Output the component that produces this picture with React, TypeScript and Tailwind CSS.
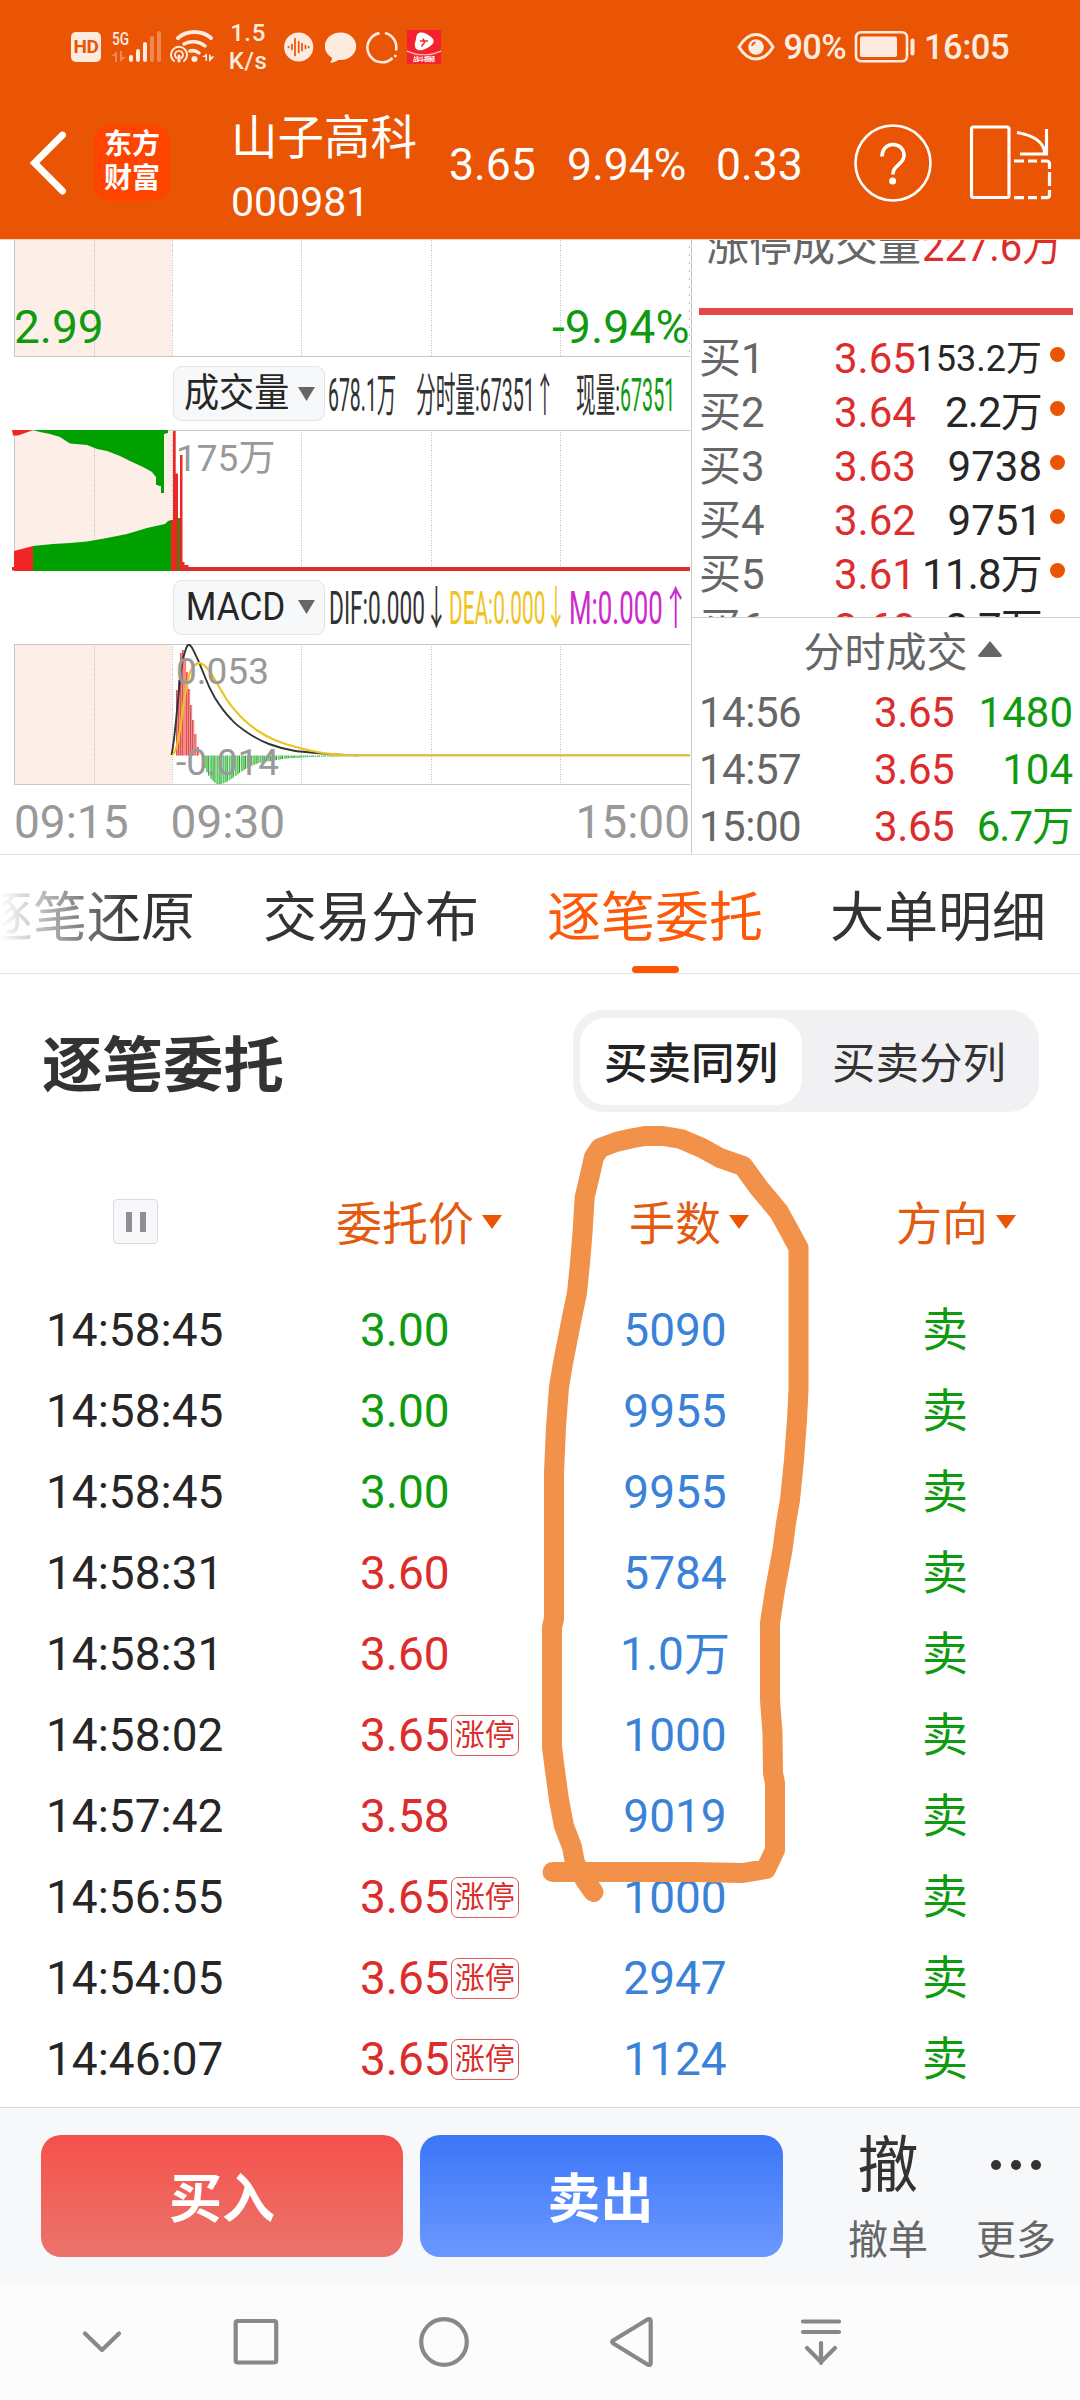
import React from 'react';

const GREEN = '#00a000';

interface Order {
  time: string;
  price: string;
  tone: string;
  limit?: boolean;
  lots: string;
}

const DOWN_TEXT = 'text-[#0f9b0f]';
const UP_TEXT = 'text-[#dc2d2d]';

const ORDERS: Order[] = [
  { time: '14:58:45', price: '3.00', tone: DOWN_TEXT, lots: '5090' },
  { time: '14:58:45', price: '3.00', tone: DOWN_TEXT, lots: '9955' },
  { time: '14:58:45', price: '3.00', tone: DOWN_TEXT, lots: '9955' },
  { time: '14:58:31', price: '3.60', tone: UP_TEXT, lots: '5784' },
  { time: '14:58:31', price: '3.60', tone: UP_TEXT, lots: '1.0万' },
  { time: '14:58:02', price: '3.65', tone: UP_TEXT, limit: true, lots: '1000' },
  { time: '14:57:42', price: '3.58', tone: UP_TEXT, lots: '9019' },
  { time: '14:56:55', price: '3.65', tone: UP_TEXT, limit: true, lots: '1000' },
  { time: '14:54:05', price: '3.65', tone: UP_TEXT, limit: true, lots: '2947' },
  { time: '14:46:07', price: '3.65', tone: UP_TEXT, limit: true, lots: '1124' },
];

const BIDS = [
  { label: '买1', price: '3.65', amount: '153.2万', size: 'text-[36px]' },
  { label: '买2', price: '3.64', amount: '2.2万', size: 'text-[42px] tracking-[-0.8px]' },
  { label: '买3', price: '3.63', amount: '9738', size: 'text-[42px]' },
  { label: '买4', price: '3.62', amount: '9751', size: 'text-[42px]' },
  { label: '买5', price: '3.61', amount: '11.8万', size: 'text-[42px] tracking-[-0.8px]' },
  { label: '买6', price: '3.60', amount: '2.7万', size: 'text-[42px] tracking-[-0.8px]' },
];

const TRADES = [
  { time: '14:56', amount: '1480', spacing: '' },
  { time: '14:57', amount: '104', spacing: '' },
  { time: '15:00', amount: '6.7万', spacing: 'tracking-[-1px]' },
];

// MACD histogram outlines, as [x, y] on the chart's own coordinates
const MACD_POS = [
  [177, 690], [179, 680], [181, 653], [183, 650], [185, 660], [187, 672],
  [189, 689], [191, 705], [193, 720], [195.5, 734], [198, 747],
];
const MACD_NEG = [
  [201, 759], [204, 768], [207, 774], [211, 780], [216, 784], [221, 784], [226, 782],
  [232, 778], [240, 772], [248, 767], [258, 763], [270, 761], [285, 758.5], [310, 757], [350, 756],
];

function negAt(x: number) {
  const i = MACD_NEG.findIndex((p) => p[0] > x);
  if (i <= 0) return 756;
  const [x0, y0] = MACD_NEG[i - 1];
  const [x1, y1] = MACD_NEG[i];
  return y0 + ((y1 - y0) * (x - x0)) / (x1 - x0);
}

function StatusBar() {
  return (
    <div className="flex h-[94px] items-center pl-[71px] pr-[71px] text-[#fdebe0]">
      <div className="flex h-[30px] w-[30px] items-center justify-center rounded-[5px] bg-[#fdebe0] text-[19px] font-bold tracking-tight text-[#e95504]">HD</div>
      <svg width="51" height="34" viewBox="111 29 51 34" className="ml-[10px]">
        <text x="112" y="43.500" fontSize="19" fontWeight="500" textLength="17" lengthAdjust="spacingAndGlyphs" fill="#fdebe0">5G</text>
        <g fill="#fdebe0">
          <rect x="129" y="54" width="4" height="7" rx="2" />
          <rect x="136" y="48" width="4" height="13" rx="2" />
          <rect x="143" y="41" width="4" height="20" rx="2" />
          <g opacity=".35">
            <rect x="150" y="35" width="4" height="26" rx="2" />
            <rect x="157" y="30" width="4" height="31" rx="2" />
            <path d="M117 50v11h-2v-6h-3.500zM120 61V50h2v6h4z" />
          </g>
        </g>
      </svg>
      <svg width="46" height="34" viewBox="170 29 46 34" className="ml-2" fill="none" stroke="#fdebe0" strokeLinecap="round">
        <path d="M178 37a26 26 0 0 1 33 0" strokeWidth="4" />
        <path d="M184 43a19 19 0 0 1 21 2" strokeWidth="3.500" />
        <path d="M190 50a10 10 0 0 1 9 2" strokeWidth="3.500" />
        <path d="M174 60a8 8 0 1 1 10 0" strokeWidth="2" />
        <path d="M176.500 57a4 4 0 1 1 5 0" strokeWidth="1.800" />
        <path d="M179 55v5" strokeWidth="3" />
        <circle cx="194.500" cy="58" r="3" fill="#fdebe0" stroke="none" />
        <path d="M207 52.500V60h-1.500v-4H202zM209 61v-7.500h1.500v2h4z" fill="#fdebe0" stroke="none" />
      </svg>
      <div className="ml-[11px] w-[42px] text-center text-[24px] leading-[28px] font-medium tracking-wide">
        1.5
        <br />
        K/s
      </div>
      <svg width="30" height="34" viewBox="284 29.500 30 34" className="ml-[15px]">
        <circle cx="298.700" cy="46.500" r="14.600" fill="#fdebe0" />
        <path d="M288.500 46v1M292 44v5M295 38v17M298.700 41v11M302 43v7M305.500 45v3M308.700 46v1" stroke="#e95504" strokeWidth="1.700" strokeLinecap="round" />
      </svg>
      <svg width="32" height="34" viewBox="325 29.500 32 34" className="ml-[11px]">
        <path d="M340.500 32c8.700 0 15.700 6 15.700 13.800 0 8-7 13.700-15.700 13.700h-2.500c-2 1.800-5 2.600-8 2.700 1.300-1.500 2-3.200 2-5-4.300-2.500-7.200-6.400-7.200-11.400C324.800 38 331.800 32 340.500 32z" fill="#fdebe0" />
      </svg>
      <svg width="34" height="34" viewBox="365 29.500 34 34" className="ml-2" fill="none" stroke="#fdebe0" strokeWidth="2.600">
        <path d="M385 32.600A14.700 14.700 0 0 1 396 50" />
        <path d="M396 54.500a14.700 14.700 0 0 1-1.500 2" />
        <path d="M392.500 57.500A14.700 14.700 0 1 1 379.500 32.600" />
      </svg>
      <svg width="34" height="34" viewBox="0 0 34 34" className="ml-2">
        <rect width="34" height="34" fill="#f5222d" />
        <path d="M12 3c4-1.500 8 1 11.500 3.500S28 12 24.500 15s-9.500 6.500-13.500 5-3.500-6-2.500-9 .5-7 3.500-8z" fill="#fff" />
        <path d="M13 11h8M16 8.500l1.500 4-3 4" stroke="#f5222d" strokeWidth="1.500" fill="none" />
        <path d="M0 21c10 5 24 5 34 0" stroke="#ffc9c9" strokeWidth="1.200" fill="none" />
        <text x="6" y="31" fontSize="6" fontWeight="700" textLength="22" fill="#fff">战斗视频</text>
      </svg>
      <div className="ml-auto flex items-center">
        <svg width="38" height="30" viewBox="0 0 38 30" fill="none">
          <path d="M2 15C7 6.500 12.500 2.500 19 2.500S31 6.500 36 15c-5 8.500-10.500 12-17 12S7 23.500 2 15z" stroke="#fdebe0" strokeWidth="3" />
          <circle cx="19" cy="15" r="7.800" fill="#fdebe0" />
          <path d="M15 14c.3-2 1.600-3.300 3.500-3.600" stroke="#e95504" strokeWidth="1.600" />
        </svg>
        <span className="ml-2 text-[34.5px] leading-none font-medium tracking-[-0.7px]">90%</span>
        <svg width="62" height="34" viewBox="0 0 62 34" className="ml-[8px]">
          <rect x="2" y="2.200" width="51" height="29" rx="5" fill="none" stroke="#fdebe0" strokeWidth="2.600" />
          <rect x="6" y="6.500" width="37" height="20.500" rx="2" fill="#fdebe0" />
          <rect x="56.500" y="8.500" width="4" height="17" rx="2" fill="#fdebe0" />
        </svg>
        <span className="ml-[8px] text-[34.5px] leading-none font-medium tracking-[-0.5px]">16:05</span>
      </div>
    </div>
  );
}

function StockHeader() {
  return (
    <div className="flex h-[145px] items-center pl-[29px] text-white">
      <svg width="38" height="64" viewBox="0 0 38 64" className="mb-[7px] shrink-0">
        <path d="M33.500 4L5.500 32l28 28" fill="none" stroke="#fff" strokeWidth="6.800" strokeLinecap="round" />
      </svg>
      <div className="mb-[7px] ml-[27px] h-[76px] w-[76px] shrink-0 rounded-[16px] bg-[#ff4400] pt-[3px] text-center text-[28px] leading-[34px] font-bold">
        东方
        <br />
        财富
      </div>
      <div className="mt-[6px] ml-[61px] w-[190px] shrink-0">
        <div className="text-[46.5px] leading-[66px]">山子高科</div>
        <div className="text-[41px] leading-[63px]">000981</div>
      </div>
      <div className="mb-[2px] ml-[28px] flex shrink-0 text-[44.5px]">
        <span className="w-[118px]">3.65</span>
        <span className="w-[149px]">9.94%</span>
        <span className="w-[137px]">0.33</span>
      </div>
      <svg width="80" height="80" viewBox="0 0 80 80" className="mb-[7px] shrink-0" fill="none" stroke="#fff">
        <circle cx="40" cy="40" r="37.500" strokeWidth="2.600" />
        <path d="M29 33.500c0-7 4.500-12 11-12s11 4.500 11 11c0 9-11 9.500-11 18v1" strokeWidth="3.600" />
        <circle cx="39.600" cy="58" r="3.500" fill="#fff" stroke="none" />
      </svg>
      <svg width="84" height="80" viewBox="969 123 84 80" className="mb-[7px] ml-[36px] shrink-0" fill="none" stroke="#fff" strokeWidth="3.200">
        <rect x="971.500" y="127" width="37.500" height="70.500" rx="2" />
        <path d="M1017 132.500c17 3 27 9 28 21.500M1046.500 129v25H1020" />
        <path d="M1014 161h10M1028 161h9M1041 161h5.500q3 0 3 3v5M1049.500 172v14M1049.500 190v5q0 2.700-3 2.700h-5.500M1037 197.700h-9M1024 197.700h-10" />
      </svg>
    </div>
  );
}

function Grid({ top, bottom }: { top: number; bottom: number }) {
  return (
    <>
      <rect x="14" y={top} width="158" height={bottom - top} fill="#fdeee7" />
      <path
        d={`M94.500 ${top}V${bottom}M172.500 ${top}V${bottom}M301.500 ${top}V${bottom}M431.500 ${top}V${bottom}M560.500 ${top}V${bottom}`}
        stroke="#b8b8b8"
        strokeWidth="1"
        strokeDasharray="1 1.500"
      />
      <path d={`M14.500 ${top}V${bottom}M14 ${bottom - 0.5}H690`} stroke="#c8c8c8" fill="none" />
    </>
  );
}

function IndicatorPicker({ children }: { children: React.ReactNode }) {
  return (
    <div className="flex h-[55px] w-[152px] shrink-0 items-center rounded-[9px] border border-[#e1e4e8] bg-[#f6f8fa] pl-[10px] text-[39px] text-[#262626]">
      <div className="w-[114px] shrink-0">
        <div className="origin-left scale-x-[.9] whitespace-nowrap">{children}</div>
      </div>
      <svg width="17" height="14" viewBox="0 0 17 14">
        <path d="M0 0h17L8.500 14z" fill="#666" />
      </svg>
    </div>
  );
}

function ChartColumn() {
  const negBars: number[] = [];
  for (let x = 202; x < 345; x += 2.05) negBars.push(x);

  return (
    <div className="flex w-[691px] shrink-0 flex-col">
      <svg width="691" height="117" viewBox="0 240 691 117" className="block shrink-0">
        <Grid top={240} bottom={357} />
        <path d="M689.500 246v110" stroke="#e9a9a9" strokeDasharray="2 6" />
        <text x="14" y="343" fontSize="46" fill="#0f9b0f">2.99</text>
        <text x="689.500" y="343" fontSize="46.500" fill="#0f9b0f" textAnchor="end">-9.94%</text>
      </svg>

      <div className="flex h-[73px] items-center pl-[173px] text-[46px] text-[#333]">
        <IndicatorPicker>成交量</IndicatorPicker>
        <div className="mt-[4px] ml-[3px] w-[88px] shrink-0">
          <div className="w-max origin-left scale-x-[.423] whitespace-nowrap">678.1万</div>
        </div>
        <div className="mt-[4px] w-[160px] shrink-0">
          <div className="w-max origin-left scale-x-[.427] whitespace-nowrap">分时量:67351↑</div>
        </div>
        <div className="mt-[4px] w-[100px] shrink-0">
          <div className="w-max origin-left scale-x-[.427] whitespace-nowrap">
            现量:<span className="text-[#0f9b0f]">67351</span>
          </div>
        </div>
      </div>

      <svg width="691" height="142" viewBox="0 430 691 142" className="block shrink-0">
        <Grid top={430} bottom={571} />
        <path d="M14 430.500H690" stroke="#c8c8c8" />
        <text x="176" y="470.500" fontSize="37" fill="#999">175万</text>
        <path
          d="M33 430L40 432 50 434 60 437 66 441 70 443.500 87 445 97 449 107 451 120 456 130 461 143 467 152 472 156 477V485H158.500V486H161V493H164V434L168 433V430z"
          fill={GREEN}
        />
        <path d="M12 430H33L28 432 22 434 18 435.500H13z" fill="#f02626" />
        <path d="M14 551L33 546V571H14z" fill="#f02626" />
        <path d="M33 546L53 544 70 543 87 541.500 107 538 127 534 147 528 165 524 168 521 171 520V571H33z" fill={GREEN} />
        <path d="M171 520H173V431H175.700V473.500H178V518H180V455H182.500V562H184.500V565H188.500V567H690V571H171z" fill="#ee2626" />
        <rect x="177" y="518" width="3.200" height="53" fill="#64700c" />
        <path d="M12 568.700H14M184 568.700H690" stroke="#d63030" strokeWidth="3.400" />
      </svg>

      <div className="flex h-[72px] items-center pl-[173px] text-[46px]">
        <div className="mb-[2px]">
          <IndicatorPicker>
            <span className="ml-[2px]">MACD</span>
          </IndicatorPicker>
        </div>
        <div className="ml-[4px] w-[120px] shrink-0 text-[#333]">
          <div className="w-max origin-left scale-x-[.493] whitespace-nowrap">DIF:0.000↓</div>
        </div>
        <div className="w-[120px] shrink-0 text-[#efc31c]">
          <div className="w-max origin-left scale-x-[.453] whitespace-nowrap">DEA:0.000↓</div>
        </div>
        <div className="w-[118px] shrink-0 text-[#cc28cc]">
          <div className="w-max origin-left scale-x-[.562] whitespace-nowrap">M:0.000↑</div>
        </div>
      </div>

      <svg width="691" height="141" viewBox="0 644 691 141" className="block shrink-0">
        <Grid top={644} bottom={785} />
        <path d="M14 644.500H690" stroke="#c8c8c8" />
        {MACD_POS.map(([x, y], i) => (
          <g key={x}>
            <rect x={x - 1} y={y} width="2.200" height={755.5 - y} fill="#ff8585" />
            {i !== 4 && <rect x={x - 1} y={y} width="0.700" height={755.5 - y} fill="#b04848" />}
          </g>
        ))}
        {negBars.map((x, i) => (
          <rect key={x} x={x} y="755.500" width={i % 3 === 0 ? 1.2 : 1.8} height={negAt(x) - 755.5} fill={i % 3 === 0 ? '#2f9a35' : '#5ccb60'} />
        ))}
        <path
          d="M171.500 755C174 744 176 722 178 700S182 655 187.700 645C191 643 194 652 198 660L205 677C208 685 211 691 215 698C220 706 225 713 231 719C236 725 242 729 248 733C254 737 261 741 269 744C277 747 285 749 293 750.500S335 755 358 755.300"
          fill="none"
          stroke="#333"
          strokeWidth="1.900"
        />
        <path
          d="M172.500 755C176 752 179 738 181 723C183 707 185 692 188 680C190 670 194 664 199 663.200C204 663 210 671 215 680L227 700C231 706 236 712 241 717C246 722 252 727 258 731C264 735 270 738 276 740.500C282 743 289 745.500 296 747C304 749.500 312 751 320 752.500S345 755 358 755.300"
          fill="none"
          stroke="#ecc421"
          strokeWidth="2.200"
        />
        <path d="M330 755.300H690" stroke="#dcc04a" strokeWidth="2.400" />
        <text x="176" y="684" fontSize="37" fill="#999">0.053</text>
        <text x="176" y="774.500" fontSize="37" fill="#999">-0.014</text>
      </svg>

      <div className="flex h-[69px] items-center pt-[4px] pr-px pl-[14px] text-[46px] leading-none text-[#999]">
        <span>09:15</span>
        <span className="ml-[42px]">09:30</span>
        <span className="ml-auto">15:00</span>
      </div>
    </div>
  );
}

function QuoteColumn() {
  return (
    <div className="flex flex-1 flex-col border-l border-[#c8c8c8] text-[42px] text-[#666]">
      <div className="flex h-[379px] flex-col overflow-hidden">
        <div className="-mt-[21px] flex h-[54px] shrink-0 items-center pl-[14px] text-[43px]">
          <span className="w-[216px] shrink-0">涨停成交量</span>
          <span className="origin-left scale-x-[.95] text-[42px] whitespace-nowrap text-[#dc2d2d]">227.6万</span>
        </div>
        <div className="mt-[35px] mr-[7px] ml-[7px] h-[7px] shrink-0 bg-[#e64747]" />
        <div className="mt-[15px] flex flex-col">
          {BIDS.map((b) => (
            <div key={b.label} className="flex h-[54px] shrink-0 items-center pl-[7px] leading-[54px]">
              <span className="w-[135px] pt-[4px]">{b.label}</span>
              <span className="w-[82px] pt-[4px] text-[#dc2d2d]">{b.price}</span>
              <span className={`flex w-[126px] justify-end pt-[3px] text-right whitespace-nowrap text-[#262626] ${b.size}`}>{b.amount}</span>
              <span className="mb-[6px] ml-[8px] h-[15px] w-[15px] rounded-full bg-[#e95504]" />
            </div>
          ))}
        </div>
      </div>
      <div className="flex h-[66px] shrink-0 items-center justify-center border-t border-[#d0d0d0] pt-[6px] pl-[33px] text-[41px]">
        <span>分时成交</span>
        <svg width="24" height="16" viewBox="0 0 24 16" className="mb-[9px] ml-[10px]">
          <path d="M12 0l12 14.500q-.5 1.500-2 1.500H2q-1.500 0-2-1.500z" fill="#666" />
        </svg>
      </div>
      <div className="flex flex-col">
        {TRADES.map((t) => (
          <div key={t.time} className="flex h-[57px] items-center pr-[7px] pl-[7px] leading-[57px]">
            <span className="w-[175px] pt-[2px] tracking-[-0.5px]">{t.time}</span>
            <span className="pt-[2px] tracking-[-0.4px] text-[#dc2d2d]">3.65</span>
            <span className={`ml-auto pt-[2px] text-[#0f9b0f] ${t.spacing}`}>{t.amount}</span>
          </div>
        ))}
      </div>
    </div>
  );
}

function SortHead({ label }: { label: string }) {
  return (
    <div className="flex items-center text-[46px] text-[#e45a10]">
      <span>{label}</span>
      <svg width="20" height="14" viewBox="0 0 20 14" className="mb-[6px] ml-[8px]">
        <path d="M0 0h20L10 14z" fill="#ea5504" />
      </svg>
    </div>
  );
}

function OrderTable() {
  return (
    <div className="flex h-[947px] shrink-0 flex-col">
      <div className="flex h-[129px] shrink-0 items-center">
        <div className="mb-[6px] ml-[113px] flex h-[45px] w-[45px] items-center justify-center gap-[8px] rounded-[4px] border border-[#d8dbe0] bg-[#f6f8fa]">
          <span className="h-[20px] w-[6px] bg-[#8e8e93]" />
          <span className="h-[20px] w-[6px] bg-[#8e8e93]" />
        </div>
        <div className="ml-[178px] w-[293px]">
          <SortHead label="委托价" />
        </div>
        <div className="w-[267px]">
          <SortHead label="手数" />
        </div>
        <SortHead label="方向" />
      </div>
      {ORDERS.map((o, i) => (
        <div key={i} className="flex h-[81px] shrink-0 items-center pt-[1px] text-[46px]">
          <span className="w-[360px] shrink-0 pl-[46px] text-[#262626]">{o.time}</span>
          <div className={`flex w-[225px] shrink-0 items-center ${o.tone}`}>
            <span>{o.price}</span>
            {o.limit && (
              <span className="ml-[1px] flex h-[41px] w-[68px] items-center justify-center rounded-[7px] border border-[#dd5a5a] text-[30px] leading-none">涨停</span>
            )}
          </div>
          <span className="w-[180px] shrink-0 text-center text-[#3a82d8]">{o.lots}</span>
          <span className="ml-[157px] text-[#0f9b0f]">卖</span>
        </div>
      ))}
    </div>
  );
}

// Freehand marker drawn around the lots column
function MarkerStroke() {
  return (
    <svg width="300" height="800" viewBox="530 1110 300 800" className="pointer-events-none absolute top-[1110px] left-[530px]" fill="none" stroke="#f29149" strokeWidth="20" strokeLinecap="round" strokeLinejoin="round">
      <path d="M593.500 1892L585 1880 575 1863 572 1847 564 1826 559 1800 554.500 1767 552 1747V1627L554 1619V1473L556 1427 559 1387 563 1363 567.500 1340 572 1317 577 1293 580 1263 582.500 1233 584.700 1197 589.500 1177 594 1157 600 1148 616 1142 631 1138.500 645 1136H663L681 1139 702 1148 720 1158 743 1166 759 1188 779 1212 790 1232 798.500 1248V1390L797 1420 794 1460 790 1500 786 1523 782.500 1550 775 1590 770 1623V1700L772.500 1733 773 1773 775 1783V1850L766 1869 743 1873 693 1872H552.500" />
    </svg>
  );
}

function TradeBar() {
  return (
    <div className="flex h-[177px] shrink-0 border-t border-[#d4d7db] bg-[#f6f8fa] pt-[27px] pl-[41px]">
      <button className="h-[122px] w-[362px] shrink-0 rounded-[20px] bg-linear-to-b from-[#f5504a] to-[#ea736c] pt-[10px] text-[53px] font-bold text-white">买入</button>
      <button className="ml-[17px] h-[122px] w-[363px] shrink-0 rounded-[20px] bg-linear-to-b from-[#3b76f8] to-[#6b98ff] pt-[10px] pr-[2px] text-[53px] font-bold text-white">卖出</button>
      <div className="ml-[55px] flex w-[100px] shrink-0 flex-col items-center">
        <span className="text-[61px] leading-[62px] text-[#333]">撤</span>
        <span className="mt-[19px] text-[40px] leading-[50px] text-[#666]">撤单</span>
      </div>
      <div className="ml-[28px] flex w-[100px] shrink-0 flex-col items-center">
        <div className="flex h-[60px] items-center gap-[10px]">
          <span className="h-[10px] w-[10px] rounded-full bg-[#333]" />
          <span className="h-[10px] w-[10px] rounded-full bg-[#333]" />
          <span className="h-[10px] w-[10px] rounded-full bg-[#333]" />
        </div>
        <span className="mt-[21px] text-[40px] leading-[50px] text-[#666]">更多</span>
      </div>
    </div>
  );
}

function NavBar() {
  return (
    <div className="flex h-[116px] shrink-0 items-center bg-[#fcfcfc] pl-[82px]">
      <svg width="40" height="54" viewBox="82 2315 40 54" fill="none" stroke="#888" strokeWidth="4.200" strokeLinecap="round" strokeLinejoin="round">
        <path d="M85 2333.500l17 16.500 17-16.500" />
      </svg>
      <svg width="46" height="54" viewBox="233 2315 46 54" className="ml-[111px]" fill="none" stroke="#888" strokeWidth="4.200">
        <rect x="235.700" y="2321" width="40.500" height="41.500" rx="2" />
      </svg>
      <svg width="52" height="54" viewBox="418 2315 52 54" className="ml-[139px]" fill="none" stroke="#888" strokeWidth="4.200">
        <circle cx="444" cy="2342" r="22.800" />
      </svg>
      <svg width="46" height="54" viewBox="608 2315 46 54" className="ml-[138px]" fill="none" stroke="#888" strokeWidth="4.200" strokeLinejoin="round">
        <path d="M613 2340.500q-1.700 1.300 0 2.800l34.500 21.200q3.200 1.500 3.200-1.500v-42q0-3-3.200-1.500z" />
      </svg>
      <svg width="44" height="54" viewBox="799 2315 44 54" className="ml-[145px]" fill="none" stroke="#888" strokeWidth="4.200" strokeLinecap="round" strokeLinejoin="round">
        <path d="M803 2321.500h36M803 2332h36M821 2343v20M807 2348l14 14 14-14" />
      </svg>
    </div>
  );
}

export default function App() {
  return (
    <div className="relative flex h-[2400px] w-[1080px] flex-col overflow-hidden bg-white font-[Roboto,'Noto_Sans_CJK_SC',sans-serif]">
      <header className="h-[240px] shrink-0 border-b border-[#fbd3bd] bg-[#e95504]">
        <StatusBar />
        <StockHeader />
      </header>

      <div className="flex h-[614px] shrink-0">
        <ChartColumn />
        <QuoteColumn />
      </div>

      <nav className="relative flex h-[120px] shrink-0 items-center gap-[68px] overflow-hidden border-y border-[#e2e2e2] text-[54px] text-[#333]">
        <span className="-ml-[21px] shrink-0 pt-[8px]">逐笔还原</span>
        <span className="shrink-0 pt-[8px]">交易分布</span>
        <span className="flex h-full shrink-0 flex-col items-center text-[#fc5a08]">
          <span className="flex h-[111px] items-center pt-[15px]">逐笔委托</span>
          <span className="h-[7px] w-[47px] rounded-full bg-[#ff5500]" />
        </span>
        <span className="-ml-[1px] shrink-0 pt-[8px]">大单明细</span>
        <div className="absolute top-0 left-0 h-full w-[130px] bg-linear-to-r from-white to-transparent" />
      </nav>

      <div className="flex h-[186px] shrink-0 items-start justify-between pt-[36px] pr-[41px] pl-[42px]">
        <h2 className="pt-[12px] text-[60.5px] leading-[90px] font-bold text-[#333]">逐笔委托</h2>
        <div className="flex h-[102px] w-[466px] items-center rounded-[30px] bg-[#f1f1f4] p-[7px] text-[43.5px] text-[#333]">
          <span className="flex h-[87px] w-[222px] items-center justify-center rounded-[26px] bg-white pt-[8px] font-medium text-[#222]">买卖同列</span>
          <span className="flex-1 pt-[8px] pl-[4px] text-center">买卖分列</span>
        </div>
      </div>

      <OrderTable />
      <TradeBar />
      <NavBar />

      <MarkerStroke />
    </div>
  );
}
